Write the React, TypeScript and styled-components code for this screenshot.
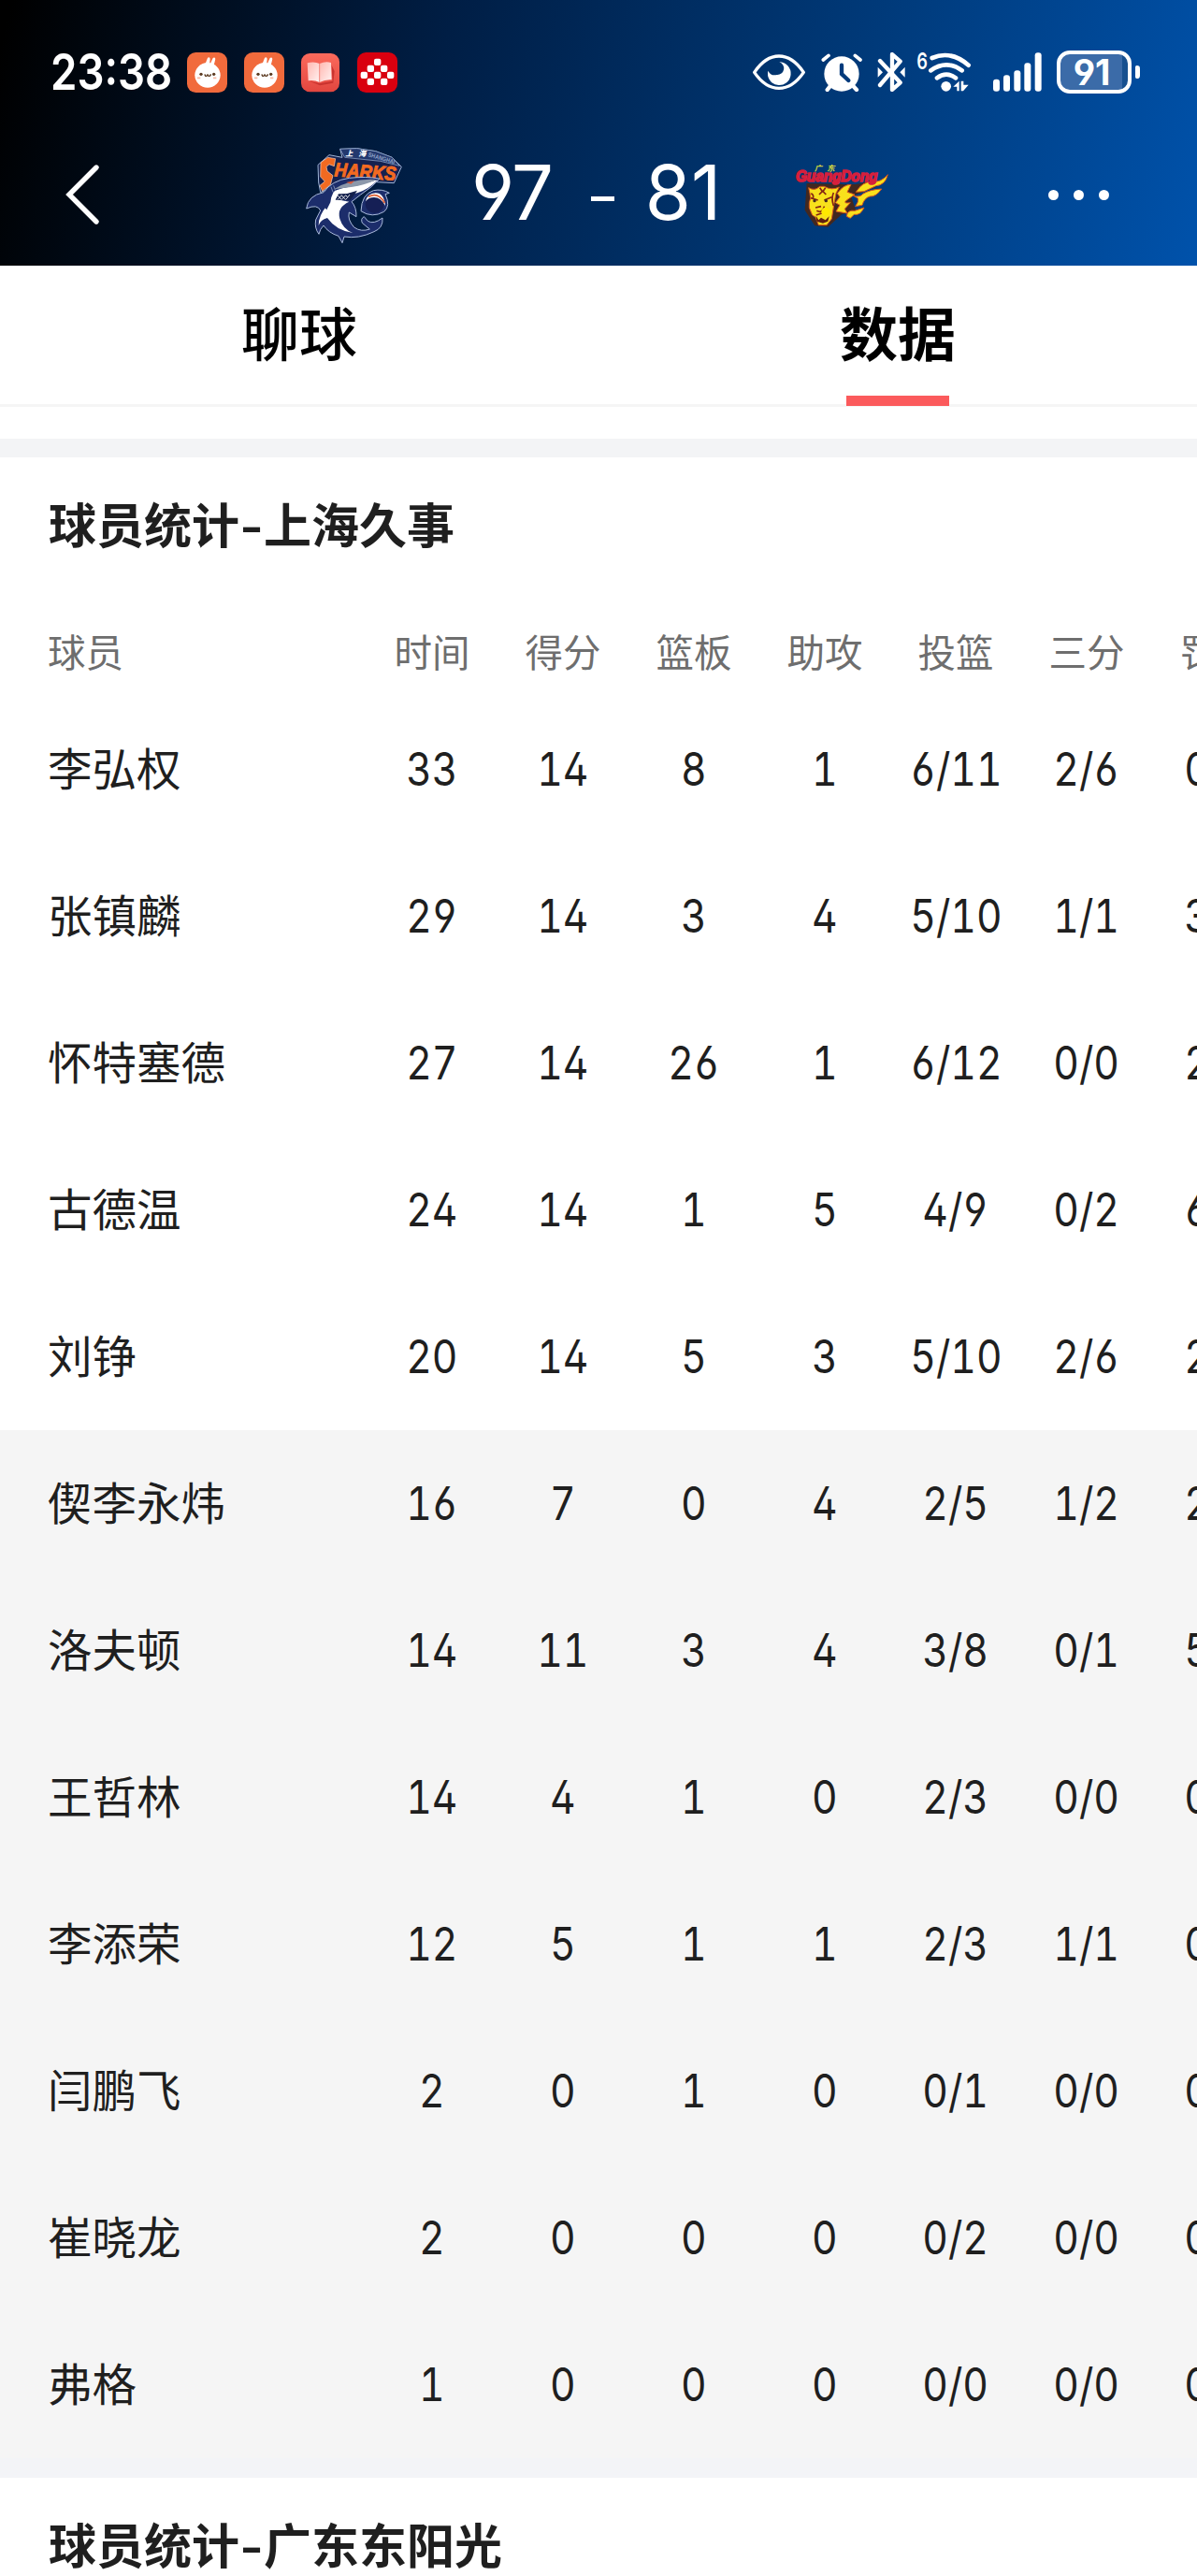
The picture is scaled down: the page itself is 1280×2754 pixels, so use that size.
import React from 'react';
import styled, { createGlobalStyle } from 'styled-components';

interface PlayerType {
  name: string;
  stats: string[];
}

const COLUMNS = ['时间', '得分', '篮板', '助攻', '投篮', '三分', '罚球'];

const starters: PlayerType[] = [
  { name: '李弘权', stats: ['33', '14', '8', '1', '6/11', '2/6', '0/0'] },
  { name: '张镇麟', stats: ['29', '14', '3', '4', '5/10', '1/1', '3/3'] },
  { name: '怀特塞德', stats: ['27', '14', '26', '1', '6/12', '0/0', '2/2'] },
  { name: '古德温', stats: ['24', '14', '1', '5', '4/9', '0/2', '6/6'] },
  { name: '刘铮', stats: ['20', '14', '5', '3', '5/10', '2/6', '2/2'] },
];

const bench: PlayerType[] = [
  { name: '偰李永炜', stats: ['16', '7', '0', '4', '2/5', '1/2', '2/2'] },
  { name: '洛夫顿', stats: ['14', '11', '3', '4', '3/8', '0/1', '5/5'] },
  { name: '王哲林', stats: ['14', '4', '1', '0', '2/3', '0/0', '0/0'] },
  { name: '李添荣', stats: ['12', '5', '1', '1', '2/3', '1/1', '0/0'] },
  { name: '闫鹏飞', stats: ['2', '0', '1', '0', '0/1', '0/0', '0/0'] },
  { name: '崔晓龙', stats: ['2', '0', '0', '0', '0/2', '0/0', '0/0'] },
  { name: '弗格', stats: ['1', '0', '0', '0', '0/0', '0/0', '0/0'] },
];

function RabbitIcon() {
  return (
    <svg width="43" height="43" viewBox="0 0 129 129">
      <rect width="129" height="129" rx="28" fill="#f16a3c" />
      <g fill="#fff">
        <ellipse cx="66" cy="73" rx="41" ry="40" />
        <path d="M58 38 L66 18 Q71 13 74 20 L72 40Z" />
        <path d="M74 38 L83 18 Q89 14 91 21 L86 42Z" />
      </g>
      <circle cx="45" cy="70" r="5" fill="#5b3a20" />
      <circle cx="86" cy="70" r="5" fill="#5b3a20" />
      <path d="M57 70q1 7 5 6t4-6q0 6 5 6t5-6" fill="none" stroke="#5b3a20" strokeWidth="4" />
      <path d="M33 82h10M84 82h10" stroke="#f6b9a6" strokeWidth="5" />
    </svg>
  );
}

function BookIcon() {
  return (
    <svg width="43" height="43" viewBox="0 0 129 129">
      <defs>
        <linearGradient id="bookBg" x1="0" y1="0" x2="0" y2="1">
          <stop offset="0" stopColor="#fb6a5c" />
          <stop offset="1" stopColor="#e2463f" />
        </linearGradient>
        <linearGradient id="bookPage" x1="0" y1="0" x2="1" y2="1">
          <stop offset="0" stopColor="#ffb7b0" />
          <stop offset="1" stopColor="#fff3f2" />
        </linearGradient>
      </defs>
      <rect x="3" y="3" width="123" height="124" rx="28" fill="url(#bookBg)" />
      <path d="M28 92 L62 100 L104 92 L100 40 L110 60 L106 98 L64 106Z" fill="#c9332f" />
      <path d="M23 34 Q45 28 62 36 V96 Q45 88 26 91Z" fill="url(#bookPage)" />
      <path d="M62 36 Q82 27 99 33 L101 88 Q82 86 62 96Z" fill="url(#bookPage)" />
      <path d="M62 36V96" stroke="#f28f87" strokeWidth="3" />
    </svg>
  );
}

function CheckerIcon() {
  const cells = [
    [65, 31],
    [43, 52], [86, 52],
    [22, 73], [65, 73], [107, 73],
    [43, 94], [86, 94],
  ];
  return (
    <svg width="43" height="43" viewBox="0 0 129 129">
      <rect width="129" height="129" rx="28" fill="#d9000f" />
      <g fill="#fff">
        {cells.map(([x, y]) => (
          <rect key={`${x}-${y}`} x={x - 11} y={y - 11} width="22" height="22" rx="6" />
        ))}
      </g>
    </svg>
  );
}

function EyeIcon() {
  return (
    <svg width="56" height="40" viewBox="72 80 168 120">
      <path
        d="M77 141 Q112 89 156 89 Q200 89 235 141 Q200 192 156 192 Q112 192 77 141Z"
        fill="none"
        stroke="#fff"
        strokeWidth="10"
        strokeLinejoin="round"
      />
      <path d="M121 136 A37 37 0 1 0 157 108 A21 21 0 0 1 149 149 Q130 154 121 136Z" fill="#fff" />
    </svg>
  );
}

function AlarmIcon() {
  return (
    <svg width="44" height="42" viewBox="291 76 132 126">
      <circle cx="357" cy="145" r="56" fill="#fff" />
      <g stroke="#fff" strokeLinecap="round" fill="none">
        <path d="M298 100 L315 86 M400 86 L417 100" strokeWidth="11" />
        <path d="M322 182 L311 196 M392 182 L405 196" strokeWidth="13" />
      </g>
      <path d="M357 117 V145 L379 166" fill="none" stroke="#003a7c" strokeWidth="13" strokeLinecap="round" />
    </svg>
  );
}

function BluetoothIcon() {
  return (
    <svg width="30" height="42" viewBox="472 77 90 126">
      <path
        d="M481 104 L546 174 L520 197 V83 L546 106 L481 182"
        fill="none"
        stroke="#fff"
        strokeWidth="13"
        strokeLinejoin="round"
        strokeLinecap="round"
      />
      <path d="M474 124 L490 141 L474 157Z M561 124 L545 141 L561 157Z" fill="#fff" />
    </svg>
  );
}

function WifiIcon() {
  return (
    <svg width="58" height="46" viewBox="598 68 174 138" overflow="visible">
      <text x="809" y="127" fontSize="74" fontWeight="600" fontFamily="Inter, sans-serif" fill="#fff" transform="scale(.74 1)">
        6
      </text>
      <g fill="none" stroke="#fff" strokeWidth="14" strokeLinecap="round">
        <path d="M648 92 Q708 66 765 115" />
        <path d="M644 132 Q694 96 744 132" />
        <path d="M664 156 Q694 134 724 156" />
      </g>
      <circle cx="693" cy="183" r="16" fill="#fff" />
      <path d="M716 184 L735 166 V198 H728 V184Z M741 166 H749 V178 H765 L748 198 H741Z" fill="#fff" />
    </svg>
  );
}

function SignalIcon() {
  return (
    <svg width="52" height="42" viewBox="843 74 156 126" fill="#fff">
      <rect x="843" y="160" width="21" height="39" rx="9" />
      <rect x="876" y="147" width="21" height="52" rx="9" />
      <rect x="910" y="132" width="21" height="67" rx="9" />
      <rect x="943" y="108" width="21" height="91" rx="9" />
      <rect x="977" y="75" width="21" height="124" rx="9" />
    </svg>
  );
}

function SharksLogo() {
  return (
    <svg width="106" height="106" viewBox="48 36 318 318">
      <path
        d="M161 43 L215 41 L275 50 L328 70 L358 100 L334 152 L262 148 L140 164 L98 182 L92 150 L90 94 L126 62 L168 70Z"
        fill="#14214f"
        stroke="#9fb4d6"
        strokeWidth="3"
      />
      <path d="M161 43 L215 41 L275 50 L328 70 L352 97 L290 82 L176 70Z" fill="#22386e" stroke="#9fb4d6" strokeWidth="2" />
      <text x="178" y="66" fontSize="24" fontStyle="italic" fontWeight="900" fontFamily="'Noto Sans CJK SC', sans-serif" fill="#fff" textLength="66">
        上海
      </text>
      <text x="250" y="67" fontSize="20" fontWeight="700" fontFamily="'Liberation Sans', sans-serif" fill="#8fa3c8" textLength="88" lengthAdjust="spacingAndGlyphs" transform="rotate(16 250 67)">
        SHANGHAI
      </text>
      <path d="M99 86 L122 70 L146 74 L142 98 L126 92 L117 100 L120 114 L138 128 L130 158 L104 178 L96 160 L112 147 L98 132Z" fill="#f26a21" stroke="#fbd2b8" strokeWidth="2" />
      <text
        x="142"
        y="130"
        fontSize="62"
        fontStyle="italic"
        fontWeight="700"
        fontFamily="'Liberation Sans', sans-serif"
        fill="#f26a21"
        stroke="#f26a21"
        strokeWidth="3"
        textLength="198"
        lengthAdjust="spacingAndGlyphs"
        transform="rotate(4 142 130)"
      >
        HARKS
      </text>
      {/* body and fins */}
      <path
        d="M53 234 Q58 192 108 182 Q134 144 190 136 Q244 130 288 138 Q266 164 226 190 L198 212 Q214 230 213 260 L190 246 Q184 270 206 294 Q228 310 256 300 L232 280 Q226 266 238 260 L250 274 Q268 286 297 264 Q300 296 270 308 Q220 332 174 324 L168 344 L156 322 Q124 312 108 288 Q96 300 93 316 Q78 296 83 270 L98 240 Q88 218 53 234Z"
        fill="#1c2d6b"
        stroke="#a9b9da"
        strokeWidth="3"
      />
      <path d="M92 288 Q92 256 118 226 L126 190 Q142 172 190 164 L282 142 Q254 172 216 184 Q190 190 166 188 L148 204 L190 212 Q150 230 160 266 Q170 300 202 312 Q148 304 120 264 Q98 270 92 288Z" fill="#fff" />
      <path d="M106 200 Q126 164 160 158 Q134 176 130 214 L118 238 Q104 224 106 200Z" fill="#1c2d6b" />
      <path d="M142 172 Q196 136 278 141 Q242 158 202 164Z" fill="#8c98aa" />
      <path d="M146 206 L156 187 Q186 188 216 176 L194 207Z" fill="#14204c" />
      <path d="M154 192 l6 7 l6 -8 l6 8 l7 -8 l6 7 l7 -9 M153 205 l6 -6 l7 6 l6 -6 l7 6 l6 -6" stroke="#fff" strokeWidth="2.5" fill="none" />
      <path d="M180 150 L208 145 L196 155Z" fill="#d85a3a" />
      <path d="M132 164 L138 181 M140 160 L146 176" stroke="#a9b9da" strokeWidth="2" />
      <path d="M228 242 Q230 188 268 176 Q296 170 319 184 L306 188 Q324 226 302 244 Q264 266 228 242Z" fill="#1c2d6b" stroke="#a9b9da" strokeWidth="3" />
      <circle cx="272" cy="219" r="30" fill="#151f55" />
      <path d="M243 211 Q248 186 275 184 Q302 184 306 225 Q292 198 270 198 Q252 198 243 211Z" fill="#fff" />
      <path d="M252 196 Q284 180 304 216" stroke="#dc5f36" strokeWidth="5" fill="none" />
    </svg>
  );
}

function GuangdongLogo() {
  return (
    <svg width="106" height="72" viewBox="57 52 318 216">
      <path d="M98 118 L206 120 Q262 126 300 110 L320 130 L240 160 L256 206 L210 218 L166 258 L124 254 L92 204Z" fill="#43281f" />
      <g fill="#f8e11c" stroke="#d8571d" strokeWidth="3">
        <path d="M104 132 Q124 144 140 128 L154 128 Q178 142 202 130 L192 150 L186 182 L178 232 L162 252 L136 252 L126 226 L116 220 L106 196 Q104 180 110 166 L108 150Z" />
        <path d="M196 150 Q216 122 240 122 L228 146 L252 154 L226 172 Q212 184 238 180 L220 200 L228 214 L192 208 L204 188 L190 180 L204 162Z" />
        <path d="M256 146 Q276 112 310 112 Q336 116 358 90 Q350 124 320 126 L282 144Z" />
        <path d="M248 158 Q270 164 278 152 Q300 138 338 136 Q320 162 300 160 Q282 166 276 188 L254 192 Q266 176 262 166Z" />
        <path d="M226 224 Q228 202 252 206 L282 196 Q270 222 250 218 L238 230Z" />
      </g>
      <path
        d="M140 132 L148 144 L138 154 M158 132 L150 144 L160 154 M111 165 L134 172 M154 172 L178 162 M126 196 L144 192 M128 220 L146 214 M130 206 Q150 216 154 192 M184 148 Q176 166 184 190 M112 150 Q122 156 118 164"
        stroke="#842414"
        strokeWidth="5"
        fill="none"
      />
      <circle cx="123" cy="174" r="5" fill="#43281f" />
      <circle cx="160" cy="174" r="5" fill="#43281f" />
      <circle cx="159" cy="209" r="14" fill="#ffe900" />
      <path d="M128 222 L136 236 L144 228 L158 236 L170 224 L166 240 L150 246 L130 240Z" fill="#60200f" />
      <text x="122" y="79" fontSize="25" fontStyle="italic" fontWeight="700" fontFamily="'Noto Sans CJK SC', sans-serif" fill="#d5d93f" textLength="66">
        广东
      </text>
      <text
        x="63"
        y="112"
        fontSize="48"
        fontStyle="italic"
        fontWeight="700"
        fontFamily="'Liberation Sans', sans-serif"
        fill="#d61f3c"
        stroke="#d61f3c"
        strokeWidth="5"
        textLength="262"
        lengthAdjust="spacingAndGlyphs"
      >
        GuangDong
      </text>
    </svg>
  );
}

interface PlayerRowsProps {
  players: PlayerType[];
}

function PlayerRows({ players }: PlayerRowsProps) {
  return (
    <>
      {players.map((player) => (
        <Row key={player.name}>
          <Name>{player.name}</Name>
          {player.stats.map((stat, i) => (
            <Stat key={i}>
              <span>{stat}</span>
            </Stat>
          ))}
        </Row>
      ))}
    </>
  );
}

interface TeamTitleProps {
  team: string;
}

function TeamTitle({ team }: TeamTitleProps) {
  return (
    <Title>
      球员统计<span>-</span>
      {team}
    </Title>
  );
}

function App() {
  return (
    <>
      <GlobalStyle />
      <Page>
        <Header>
          <StatusBar>
            <Clock>
              <span>23:38</span>
            </Clock>
            <AppIcons>
              <RabbitIcon />
              <RabbitIcon />
              <BookIcon />
              <CheckerIcon />
            </AppIcons>
            <SystemIcons>
              <EyeIcon />
              <AlarmIcon />
              <BluetoothIcon />
              <WifiIcon />
              <SignalIcon />
              <Battery>
                <BatteryBody>91</BatteryBody>
                <BatteryTip />
              </Battery>
            </SystemIcons>
          </StatusBar>
          <NavBar>
            <BackButton>
              <svg width="40" height="68" viewBox="0 0 40 68">
                <path d="M34 5 L5 34 L34 63" fill="none" stroke="#fff" strokeWidth="5.4" strokeLinecap="round" />
              </svg>
            </BackButton>
            <SharksLogo />
            <Score>
              <Points $width={84}>97</Points>
              <Dash />
              <Points $width={69}>81</Points>
            </Score>
            <GuangdongLogo />
            <MoreButton>
              <i />
              <i />
              <i />
            </MoreButton>
          </NavBar>
        </Header>
        <Tabs>
          <Tab>聊球</Tab>
          <Tab $active>数据</Tab>
        </Tabs>
        <Divider />
        <TeamTitle team="上海久事" />
        <HeadRow>
          <HeadName>球员</HeadName>
          {COLUMNS.map((column) => (
            <HeadCell key={column}>{column}</HeadCell>
          ))}
        </HeadRow>
        <PlayerRows players={starters} />
        <Bench>
          <PlayerRows players={bench} />
        </Bench>
        <BottomDivider />
        <TeamTitle team="广东东阳光" />
      </Page>
    </>
  );
}

export default App;

// Styles
const GlobalStyle = createGlobalStyle`
  * {
    box-sizing: border-box;
  }
  body {
    margin: 0;
    background: #fff;
    font-family: 'Noto Sans CJK SC', sans-serif;
    color: #1f1f1f;
  }
  svg {
    display: block;
    flex: none;
  }
`;

const Page = styled.div`
  width: 1280px;
  height: 2754px;
  overflow: hidden;
`;

const Header = styled.header`
  height: 284px;
  background: linear-gradient(105deg, #000 1%, #001e45 36%, #003a7a 70%, #0052ab 100%);
  color: #fff;
`;

const StatusBar = styled.div`
  display: flex;
  align-items: center;
  height: 154px;
  padding-left: 54px;
`;

const Clock = styled.div`
  width: 146px;
  font-family: Inter, sans-serif;
  font-size: 53px;
  font-weight: 600;
  line-height: 1;
  white-space: nowrap;
  span {
    display: inline-block;
    transform: scaleX(0.86);
    transform-origin: left;
  }
`;

const AppIcons = styled.div`
  display: flex;
  gap: 17.5px;
`;

const SystemIcons = styled.div`
  display: flex;
  align-items: center;
  margin-left: 380px;
  svg:nth-child(2) {
    margin-left: 17px;
  }
  svg:nth-child(3) {
    margin-left: 16px;
  }
  svg:nth-child(4) {
    margin-left: 12px;
  }
  svg:nth-child(5) {
    margin-left: 24px;
  }
`;

const Battery = styled.div`
  display: flex;
  align-items: center;
  gap: 4px;
  margin-left: 16px;
`;

const BatteryBody = styled.div`
  width: 80px;
  height: 46px;
  padding-right: 4px;
  border: 4px solid #fff;
  border-radius: 14px;
  background: linear-gradient(90deg, #3b6ba8 91%, #17508f 91%);
  font-family: Inter, sans-serif;
  font-size: 38px;
  font-weight: 700;
  line-height: 38px;
  text-align: center;
  font-feature-settings: 'cv03', 'cv04';
`;

const BatteryTip = styled.div`
  width: 5px;
  height: 14px;
  border-radius: 2px 4px 4px 2px;
  background: #fff;
`;

const NavBar = styled.div`
  display: flex;
  align-items: center;
  height: 112px;
  padding-left: 69px;
`;

const BackButton = styled.div`
  margin-right: 217px;
  padding-bottom: 5px;
`;

const Score = styled.div`
  display: flex;
  align-items: center;
  width: 417px;
  padding: 0 0 7px 74px;
`;

const Points = styled.span<{ $width: number }>`
  display: flex;
  justify-content: center;
  width: ${({ $width }) => $width}px;
  font-family: Inter, sans-serif;
  font-size: 81px;
  font-weight: 400;
  line-height: 1;
  font-feature-settings: 'cv03', 'cv04';
  transform: scaleX(0.98);
`;

const Dash = styled.span`
  width: 25px;
  height: 5px;
  margin: 12px 39px 0 42px;
  background: #fff;
`;

const MoreButton = styled.div`
  display: flex;
  gap: 16px;
  margin-left: 166px;
  padding-bottom: 4px;
  i {
    width: 11px;
    height: 11px;
    border-radius: 50%;
    background: #fff;
  }
`;

const Tabs = styled.nav`
  display: flex;
  height: 151px;
  border-bottom: 3px solid #f5f5f5;
`;

const Tab = styled.div<{ $active?: boolean }>`
  display: flex;
  flex-direction: column;
  align-items: center;
  width: 640px;
  padding-top: 26px;
  font-size: 62px;
  font-weight: ${({ $active }) => ($active ? 700 : 500)};
  line-height: 88px;
  color: #000;
  &::after {
    content: '';
    flex: none;
    width: 110px;
    height: 11px;
    margin-top: 25px;
    background: ${({ $active }) => ($active ? '#fb5a5c' : 'transparent')};
  }
`;

const Divider = styled.div`
  height: 20px;
  margin-top: 34px;
  background: #f3f4f6;
`;

const BottomDivider = styled.div`
  height: 21px;
  background: #f3f4f7;
`;

const Title = styled.h2`
  margin: 0;
  padding: 33px 52px 0;
  height: 162px;
  font-size: 51px;
  font-weight: 700;
  line-height: 74px;
  span {
    display: inline-block;
    width: 26px;
    text-align: center;
    transform: scaleX(1.3);
  }
`;

const HeadRow = styled.div`
  display: flex;
  align-items: center;
  height: 93px;
  padding-bottom: 5px;
  font-size: 40.5px;
  color: #6e6e6e;
`;

const HeadName = styled.div`
  flex: none;
  width: 392px;
  padding-left: 51px;
`;

const HeadCell = styled.div`
  flex: none;
  width: 140px;
  text-align: center;
`;

const Row = styled.div`
  display: flex;
  align-items: center;
  height: 157px;
`;

const Name = styled.div`
  flex: none;
  width: 392px;
  padding: 0 0 7px 51px;
  font-size: 47.5px;
`;

const Stat = styled.div`
  display: flex;
  justify-content: center;
  flex: none;
  width: 140px;
  font-family: Inter, sans-serif;
  font-size: 49px;
  font-feature-settings: 'tnum', 'cv02', 'cv03', 'cv04';
  span {
    transform: scaleX(0.87);
  }
`;

const Bench = styled.div`
  background: #f5f5f5;
`;
